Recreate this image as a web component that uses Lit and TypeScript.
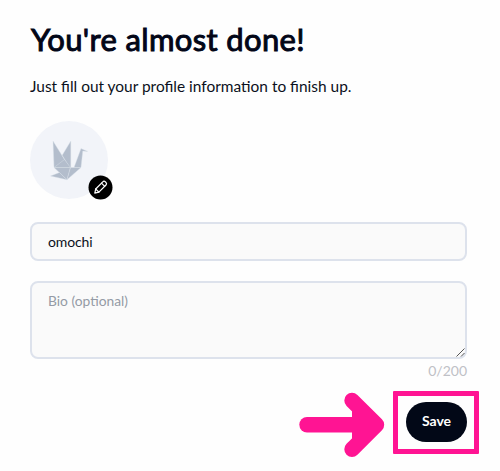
import { LitElement, html, css } from "lit";
import { customElement } from "lit/decorators.js";

@customElement("app-root")
export class AppRoot extends LitElement {
  static styles = css`
    :host {
      display: block;
      position: relative;
      box-sizing: border-box;
      height: 471px;
      padding: 20px 33px 0 30px;
      background: #fefefe;
      overflow: hidden;
      color: #020617;
      font-family: Lato, "Liberation Sans", sans-serif;
    }
    * { box-sizing: border-box; }
    h1 {
      margin: 0;
      height: 40px;
      padding-left: 1px;
      font-size: 31px;
      line-height: 38px;
      font-weight: 400;
      letter-spacing: 0.35px;
      -webkit-text-stroke: 1px #020617;
      white-space: nowrap;
    }
    .lead {
      margin: 16px 0 0;
      height: 20px;
      font-size: 15.45px;
      line-height: 20px;
      white-space: nowrap;
      color: #0b1020;
    }
    .avatar {
      position: relative;
      width: 78px;
      height: 78px;
      margin-top: 25px;
      border-radius: 50%;
      background: #f2f4f9;
    }
    .avatar svg { display: block; }
    .avatar .edit {
      position: absolute;
      left: 58px;
      top: 54px;
      width: 25px;
      height: 25px;
    }
    .field {
      display: block;
      width: 100%;
      margin: 0;
      border: 2px solid #dde2ec;
      border-radius: 8px;
      background: #fafafa;
      outline: none;
      padding: 0 16px;
      font: 14px/18px Lato, "Liberation Sans", sans-serif;
      color: #0b1020;
    }
    input.field { height: 39px; margin-top: 23px; letter-spacing: -0.15px; }
    .bio { position: relative; height: 78px; margin-top: 20px; }
    textarea.field { height: 78px; padding-top: 9px; resize: none; font-size: 13.8px; }
    .field::placeholder { color: #949aa5; opacity: 1; }
    .grip { position: absolute; right: 2px; bottom: 2px; }
    .count {
      height: 18px;
      margin-top: 3px;
      text-align: right;
      font-size: 14px;
      line-height: 18px;
      color: #bfc1c6;
    }
    .actions { display: flex; justify-content: flex-end; margin-top: 22px; }
    button {
      width: 61px;
      height: 40px;
      border: 0;
      padding: 0 0 2px;
      border-radius: 20px;
      background: #020817;
      color: #fff;
      font: 700 14px/18px Lato, "Liberation Sans", sans-serif;
    }
    .frame {
      position: absolute;
      left: 393px;
      top: 391px;
      width: 86px;
      height: 63px;
      border: 5px solid #ff1493;
      border-radius: 1px;
      pointer-events: none;
    }
    .arrow { position: absolute; left: 295px; top: 388px; }
  `;

  render() {
    return html`
      <h1>You're almost done!</h1>
      <p class="lead">Just fill out your profile information to finish up.</p>
      <div class="avatar">
        <svg width="78" height="78" viewBox="0 0 78 78">
          <g fill="#b3bdcc" stroke="#dce2eb" stroke-width=".4" stroke-linejoin="round">
            <path d="M23 20 39.5 46.5H24Z" />
            <path d="M40.8 20V46.5H39.5L32.2 34.2Z" />
            <path d="M24 46.5 34.5 38.5 40.5 46.5Z" />
            <path d="M24 46.5H40.5L37 58.8Z" />
            <path d="M40.5 46.5H51L37 58.8Z" />
            <path d="M20.5 55 29.5 51.5 37 58.8Z" />
            <path d="M44 46.5 51 27.5 57.8 30.4 52.8 30 51 46.5Z" />
          </g>
        </svg>
        <svg class="edit" viewBox="0 0 25 25">
          <circle cx="12.5" cy="12.5" r="12" fill="#000" />
          <g fill="none" stroke="#fff" stroke-width="1.2" stroke-linejoin="round" stroke-linecap="round">
            <path d="M6.8 18.1 7.7 14 14.8 6.8Q16 5.6 17.3 6.8L18 7.5Q19.2 8.8 18 10L10.9 17.1Z" />
            <path d="m13.5 8.1 3.2 3.2M7.7 14l3.2 3.1" />
          </g>
        </svg>
      </div>
      <input class="field" value="omochi" />
      <div class="bio">
        <textarea class="field" placeholder="Bio (optional)"></textarea>
        <svg class="grip" width="9" height="9" viewBox="0 0 9 9">
          <path d="M.5 8.5l8-8M5 8.5 8.5 5" fill="none" stroke="#555" stroke-width="1" />
        </svg>
      </div>
      <div class="count">0/200</div>
      <div class="actions"><button>Save</button></div>
      <div class="frame"></div>
      <svg class="arrow" width="94" height="74" viewBox="0 0 94 74">
        <path d="M12 36.8H78" stroke="#ff1493" stroke-width="15.4" stroke-linecap="round" />
        <path d="M57 12.5 81.5 36.8 57 61.3" fill="#ff1493" stroke="#ff1493" stroke-width="15.4" stroke-linecap="round" stroke-linejoin="round" />
      </svg>
    `;
  }
}
